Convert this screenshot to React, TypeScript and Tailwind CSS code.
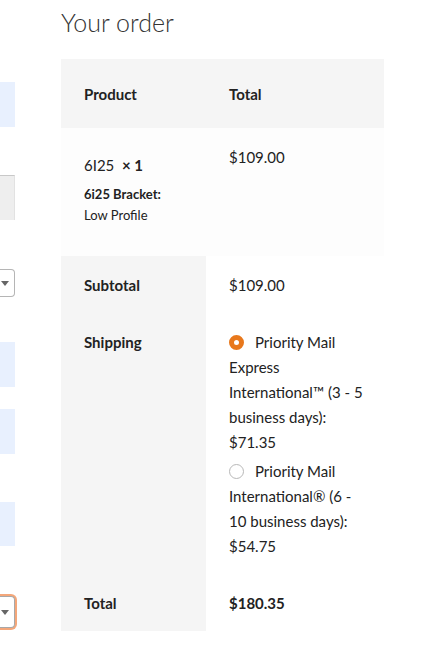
export default function App() {
  const font = { fontFamily: 'Lato, "Noto Sans", sans-serif' }
  return (
    <div className="w-[428px] h-[661px] bg-white overflow-hidden flex text-[#222]" style={font}>
      {/* left form column, clipped */}
      <div className="w-[17px] shrink-0 flex flex-col">
        <div className="mt-[82px] h-[45px] w-[15px] bg-[#e8f0fe]" />
        <div className="mt-[48px] h-[45px] w-[15px] bg-[#eeeeee] border-t border-t-[#c8c8c8] border-r border-r-[#e2e2e2]" />
        <div className="mt-[49px] h-[28px] w-[15px] bg-white border border-l-0 border-[#b5b5b5] rounded-r-[4px] flex items-center pl-[1px]">
          <span className="w-0 h-0 border-l-[4px] border-r-[4px] border-t-[5px] border-l-transparent border-r-transparent border-t-[#666]" />
        </div>
        <div className="mt-[45px] h-[45px] w-[15px] bg-[#e8f0fe]" />
        <div className="mt-[22px] h-[45px] w-[15px] bg-[#e8f0fe]" />
        <div className="mt-[48px] h-[44px] w-[15px] bg-[#e8f0fe]" />
        <div className="mt-[48px] h-[36px] w-[17px] rounded-r-[6px] bg-[#f4a77a] py-[2px] pr-[2px]">
          <div className="h-full w-[15px] bg-white border border-l-0 border-[#a8a8a8] rounded-r-[4px] flex items-center pl-[1px]">
            <span className="w-0 h-0 border-l-[4px] border-r-[4px] border-t-[5px] border-l-transparent border-r-transparent border-t-[#666]" />
          </div>
        </div>
      </div>

      {/* order review */}
      <div className="ml-[44px] w-[323px] shrink-0">
        <h3 className="h-[59px] pt-[6px] text-[25px] leading-[32px] font-light text-[#333]">Your order</h3>
        <table className="w-[323px] border-collapse table-fixed text-[15px] leading-[25px]">
          <colgroup>
            <col className="w-[145px]" />
            <col className="w-[178px]" />
          </colgroup>
          <thead>
            <tr className="bg-[#f5f5f5]">
              <th className="text-left font-bold px-[23px] pt-[23px] pb-[21px]">Product</th>
              <th className="text-left font-bold px-[23px] pt-[23px] pb-[21px]">Total</th>
            </tr>
          </thead>
          <tbody>
            <tr className="bg-[#fdfdfd]">
              <td className="align-top px-[23px] pt-[25px] pb-[30px]">
                <div>
                  6I25&nbsp;&nbsp;<strong className="font-bold">× 1</strong>
                </div>
                <div className="mt-[6px] text-[13px] leading-[21px]">
                  <div className="font-bold">6i25 Bracket:</div>
                  <div>Low Profile</div>
                </div>
              </td>
              <td className="align-top px-[23px] pt-[17px]">$109.00</td>
            </tr>
          </tbody>
          <tfoot>
            <tr>
              <th className="bg-[#f5f5f5] text-left font-bold align-top px-[23px] pt-[17px] pb-[15px]">Subtotal</th>
              <td className="bg-white align-top px-[23px] pt-[17px] pb-[15px]">$109.00</td>
            </tr>
            <tr>
              <th className="bg-[#f5f5f5] text-left font-bold align-top px-[23px] pt-[17px] pb-[15px]">Shipping</th>
              <td className="bg-white align-top px-[23px] pt-[17px] pb-[15px] whitespace-nowrap">
                <ul>
                  <li>
                    <span className="inline-block align-[-2px] w-[15px] h-[15px] rounded-full border-[5px] border-[#e8781c] bg-white mr-[11px]" />
                    Priority Mail
                    <br />
                    Express
                    <br />
                    International™ (3 - 5
                    <br />
                    business days):
                    <br />
                    $71.35
                  </li>
                  <li className="mt-[4px]">
                    <span className="inline-block align-[-2px] w-[15px] h-[15px] rounded-full border border-[#b8b8b8] bg-white mr-[11px]" />
                    Priority Mail
                    <br />
                    International® (6 -
                    <br />
                    10 business days):
                    <br />
                    $54.75
                  </li>
                </ul>
              </td>
            </tr>
            <tr>
              <th className="bg-[#f5f5f5] text-left font-bold align-top px-[23px] pt-[17px] pb-[15px]">Total</th>
              <td className="bg-white align-top px-[23px] pt-[17px] pb-[15px] font-bold">$180.35</td>
            </tr>
          </tfoot>
        </table>
      </div>
    </div>
  )
}
